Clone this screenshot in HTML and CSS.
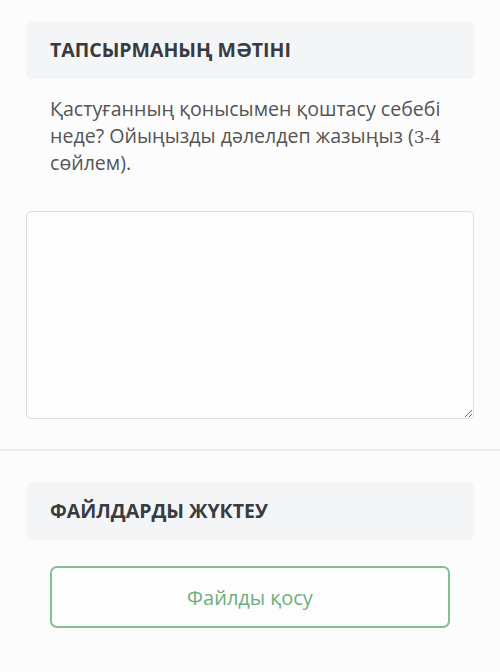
FILE: index.html
```html
<!DOCTYPE html>
<html>
<head>
  <title>Тапсырма</title>
  <link rel="stylesheet" href="styles.css">
</head>
<body>
  <div class="section">
    <div class="section-title">ТАПСЫРМАНЫҢ МӘТІНІ</div>
    <p class="task-text">Қастуғанның қонысымен қоштасу себебі неде? Ойыңызды дәлелдеп жазыңыз (<span class="num">3-4</span> сөйлем).</p>
    <textarea class="answer"></textarea>
  </div>

  <div class="section files">
    <div class="section-title">ФАЙЛДАРДЫ ЖҮКТЕУ</div>
    <button class="add-file">Файлды қосу</button>
  </div>
</body>
</html>
```

FILE: styles.css
```css
body {
  margin: 0;
  background-color: #fcfcfc;
  font-family: "Open Sans", Arial, sans-serif;
  color: #555;
}

.section {
  padding: 21px 26px 30px;
}

.section-title {
  height: 58px;
  line-height: 58px;
  padding: 0 24px;
  background-color: #f4f5f7;
  border-radius: 6px;
  font-size: 19.5px;
  font-weight: bold;
  color: #383b40;
}

.task-text {
  margin: 16px 8px 0 24px;
  font-size: 19.6px;
  line-height: 27px;
  color: #555;
}

.task-text .num {
  font-family: "DejaVu Serif", serif;
  font-size: 17px;
  line-height: 1;
}

.answer {
  display: block;
  box-sizing: border-box;
  width: 100%;
  height: 208px;
  margin-top: 35px;
  border: 1px solid #dedede;
  border-radius: 5px;
  background-color: #fdfdfd;
}

.files {
  border-top: 2px solid #ececec;
  padding-top: 31px;
}

.add-file {
  display: block;
  box-sizing: border-box;
  width: 400px;
  height: 62px;
  margin: 26px 24px 0;
  border: 2px solid #86bd96;
  border-radius: 7px;
  background-color: #fdfdfd;
  font-family: "Open Sans", Arial, sans-serif;
  font-size: 20px;
  color: #6caf80;
}
```
